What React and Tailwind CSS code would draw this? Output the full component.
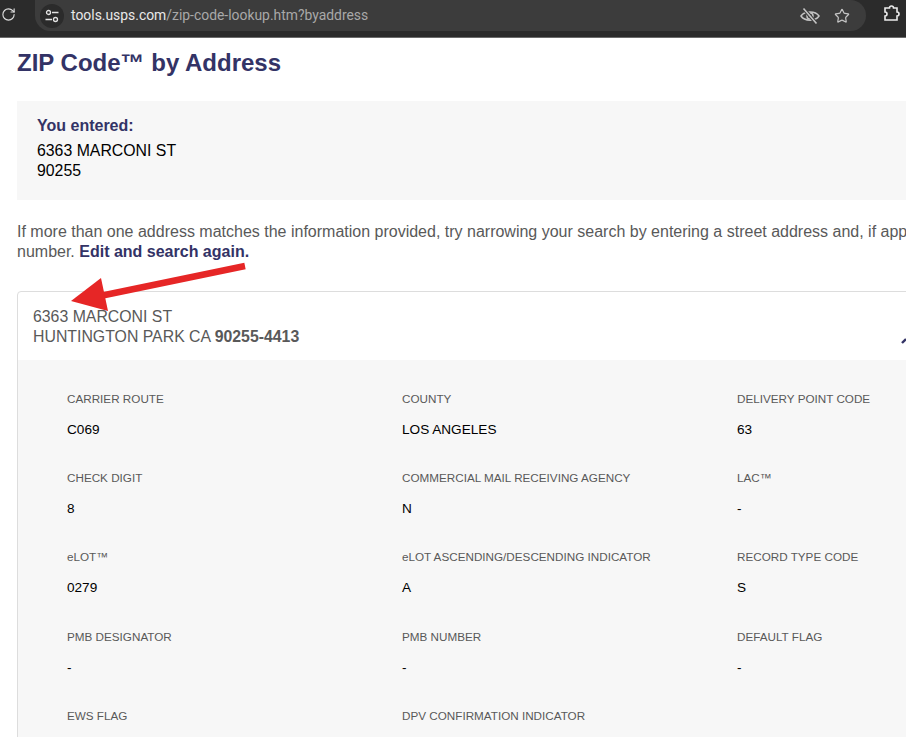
import React from 'react';
import { RotateCw, Star } from 'lucide-react';

const rows = [
  [
    { label: 'CARRIER ROUTE', value: 'C069' },
    { label: 'COUNTY', value: 'LOS ANGELES' },
    { label: 'DELIVERY POINT CODE', value: '63' },
  ],
  [
    { label: 'CHECK DIGIT', value: '8' },
    { label: 'COMMERCIAL MAIL RECEIVING AGENCY', value: 'N' },
    { label: 'LAC™', value: '-' },
  ],
  [
    { label: 'eLOT™', value: '0279' },
    { label: 'eLOT ASCENDING/DESCENDING INDICATOR', value: 'A' },
    { label: 'RECORD TYPE CODE', value: 'S' },
  ],
  [
    { label: 'PMB DESIGNATOR', value: '-' },
    { label: 'PMB NUMBER', value: '-' },
    { label: 'DEFAULT FLAG', value: '-' },
  ],
  [
    { label: 'EWS FLAG', value: '' },
    { label: 'DPV CONFIRMATION INDICATOR', value: '' },
    { label: '', value: '' },
  ],
];

const TuneIcon = () => (
  <svg width="14" height="14" viewBox="0 0 14 14" fill="none" stroke="#e3e3e3" strokeWidth="1.3">
    <circle cx="3.5" cy="3.5" r="2" />
    <path d="M7 3.5h6.5M0.5 10.5h6.5" />
    <circle cx="10.5" cy="10.5" r="2" />
  </svg>
);

const HiddenEyeIcon = () => (
  <svg className="ml-auto" width="20" height="18" viewBox="0 0 20 18" fill="none" stroke="#c4c4c4" strokeWidth="1.5">
    <path d="M1 9C4.5 3.5 15.5 3.5 19 9C15.5 14.5 4.5 14.5 1 9Z" />
    <circle cx="10" cy="9" r="3" />
    <path d="M3.5 1.5L16.5 16.5" stroke="#3c3c3c" strokeWidth="3.5" />
    <path d="M3.5 1.5L16.5 16.5" strokeWidth="1.6" />
  </svg>
);

const ExtensionIcon = () => (
  <svg className="ml-[17px] mt-[4px] shrink-0" width="18" height="18" viewBox="0 0 18 18" fill="none" stroke="#ececec" strokeWidth="1.6">
    <path d="M2 4H6.5a2 2 0 0 1 4 0H14V8a2 2 0 0 1 0 4V16H2V12a2 2 0 0 0 0-4Z" />
  </svg>
);

const App = () => {
  return (
    <div className="relative h-[737px] w-[906px] overflow-hidden bg-white font-['Liberation_Sans',Arial,sans-serif]">
      {/* Browser bar */}
      <div className="flex h-[38px] items-start border-b border-[#6b6b6b] bg-[#2b2b2b]">
        <RotateCw size={15} strokeWidth={1.8} className="ml-[1px] mt-[7px] shrink-0 text-[#dcdcdc]" />
        <div className="ml-[19px] flex h-[31px] w-[831px] items-center rounded-r-[20px] rounded-bl-[20px] bg-[#3c3c3c] pl-[5px]">
          <div className="flex h-[24px] w-[24px] items-center justify-center rounded-full bg-[#2b2b2b]">
            <TuneIcon />
          </div>
          <div className="ml-[7px] font-['Roboto',sans-serif] text-[13.9px] text-[#a8a8a8]">
            <span className="text-[#e8e8e8]">tools.usps.com</span>/zip-code-lookup.htm?byaddress
          </div>
          <HiddenEyeIcon />
          <Star size={16} strokeWidth={1.8} className="ml-[14px] mr-[16px] text-[#c4c4c4]" />
        </div>
        <ExtensionIcon />
      </div>

      {/* Page content */}
      <div className="w-[1300px] pl-[17px]">
        <h1 className="mt-[10px] text-[24px] font-bold leading-[30px] text-[#333366]">ZIP Code™ by Address</h1>

        <div className="mt-[23px] h-[99px] bg-[#f7f7f7] px-5 pt-[15px]">
          <div className="text-[16px] font-bold leading-[20px] text-[#333366]">You entered:</div>
          <div className="mt-[4px] text-[15.85px] leading-[21px] text-black">6363 MARCONI ST</div>
          <div className="text-[15.85px] leading-[20px] text-black">90255</div>
        </div>

        <p className="mt-[22px] text-[16px] leading-[20px] text-[#595959]">
          If more than one address matches the information provided, try narrowing your search by entering a street address and, if applicable, an apartment or suite
          <br />
          number. <span className="font-bold text-[#333366]">Edit and search again.</span>
        </p>

        <div className="mt-[29px] rounded-[4px] border border-[#dddddd]">
          <div className="relative h-[68px] px-[15px] pt-[15px] text-[15.85px] leading-[20px] text-[#595959]">
            <div>6363 MARCONI ST</div>
            <div>
              HUNTINGTON PARK CA <span className="font-bold">90255-4413</span>
            </div>
          </div>
          <div className="bg-[#f7f7f7] pl-[49px] pt-[32px]">
            {rows.map((row) => (
              <div key={row[0].label} className="grid h-[79.2px] grid-cols-[335px_335px_335px]">
                {row.map((cell) => (
                  <div key={cell.label}>
                    <div className="text-[11.7px] leading-[14px] text-[#595959]">{cell.label}</div>
                    <div className="mt-[16px] text-[13.6px] leading-[15px] text-black">{cell.value}</div>
                  </div>
                ))}
              </div>
            ))}
          </div>
        </div>
      </div>

      {/* Chevron clipped by the window edge */}
      <svg className="absolute left-[900px] top-[336px]" width="6" height="8" viewBox="0 0 6 8">
        <path d="M2 7 L6 3" stroke="#333366" strokeWidth="2.4" fill="none" />
      </svg>

      {/* Annotation arrow */}
      <svg className="absolute left-0 top-0" width="906" height="737" viewBox="0 0 906 737" fill="none">
        <path d="M245 266 L100 296" stroke="#e62626" strokeWidth="6.5" />
        <path d="M71 301 L101 278 L108 311 Z" fill="#e62626" />
      </svg>
    </div>
  );
};

export default App;
